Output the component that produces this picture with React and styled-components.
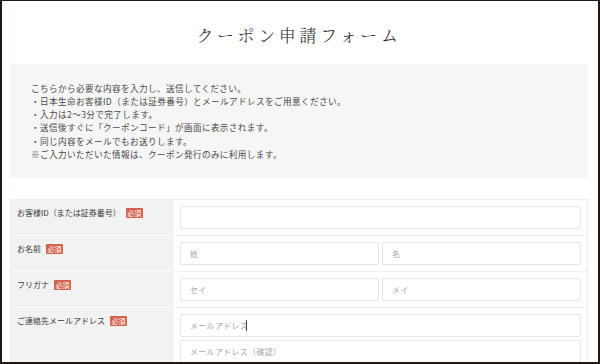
import React from "react";
import styled, { createGlobalStyle } from "styled-components";

const Global = createGlobalStyle`
  html, body { margin: 0; padding: 0; background: #fff; }
  body { font-family: "Noto Sans CJK JP", "Noto Sans", sans-serif; color: #333; }
  * { box-sizing: border-box; }
`;

const Frame = styled.div`
  width: 600px;
  height: 364px;
  overflow: hidden;
  border: 2px solid #231815;
  border-top-width: 1px;
  padding: 0 10px 0 8px;
  background: #fff;
`;

const Title = styled.h1`
  margin: 0;
  padding-top: 22px;
  margin-bottom: 17px;
  font-family: "Noto Serif CJK JP", "Noto Sans CJK JP", serif;
  font-weight: 300;
  font-size: 17px;
  line-height: 24px;
  letter-spacing: 3.6px;
  text-align: center;
  color: #2a2a2a;
`;

const InfoBox = styled.div`
  background: #f6f6f6;
  padding: 17.5px 21px 16.5px;
  font-size: 8.6px;
  line-height: 13.33px;
  letter-spacing: 0.4px;
  color: #4a4a4a;
`;

const InfoLine = styled.p`
  margin: 0;
  white-space: nowrap;
`;

const FormTable = styled.div`
  margin-top: 21px;
  display: grid;
  grid-template-columns: 163px 1fr;
  border: 1px solid #efefef;
  border-bottom: none;
`;

const LabelCell = styled.div`
  background: #f2f2f2;
  padding: 8px 6px 0 6px;
  border-bottom: 1px solid #fafafa;
  display: flex;
  align-items: flex-start;
  font-size: 8px;
  line-height: 10px;
  font-weight: 400;
  color: #3a3a3a;
  white-space: nowrap;
`;

const Badge = styled.span`
  display: inline-block;
  margin-left: 5px;
  width: 17px;
  height: 10px;
  border-radius: 1px;
  background: #d4614c;
  color: #fff;
  font-size: 7px;
  line-height: 10px;
  text-align: center;
  font-weight: 400;
`;

const InputCell = styled.div`
  padding: 6px 6px;
  border-bottom: 1px solid #efefef;
  display: flex;
  flex-direction: column;
  gap: 3px;
`;

const Pair = styled.div`
  display: grid;
  grid-template-columns: 1fr 1fr;
  gap: 3px;
`;

const Field = styled.div`
  position: relative;
`;

const Input = styled.input`
  display: block;
  width: 100%;
  height: 23px;
  border: 1px solid #e6e6e6;
  border-radius: 2px;
  padding: 0 9px;
  font-family: "Noto Sans CJK JP", sans-serif;
  font-size: 8px;
  letter-spacing: 0.3px;
  color: #333;
  background: #fff;
  outline: none;
  &::placeholder { color: #a8a8a8; }
`;

const Caret = styled.span`
  position: absolute;
  left: ${(p) => p.$left}px;
  top: 6px;
  width: 1px;
  height: 11px;
  background: #444;
`;

const Label = ({ text }) => (
  <LabelCell>
    {text}
    <Badge>必須</Badge>
  </LabelCell>
);

export default function App() {
  return (
    <>
      <Global />
      <Frame>
        <Title>クーポン申請フォーム</Title>
        <InfoBox>
          <InfoLine>こちらから必要な内容を入力し、送信してください。</InfoLine>
          <InfoLine>・日本生命お客様ID（または証券番号）とメールアドレスをご用意ください。</InfoLine>
          <InfoLine>・入力は2〜3分で完了します。</InfoLine>
          <InfoLine>・送信後すぐに「クーポンコード」が画面に表示されます。</InfoLine>
          <InfoLine>・同じ内容をメールでもお送りします。</InfoLine>
          <InfoLine>※ご入力いただいた情報は、クーポン発行のみに利用します。</InfoLine>
        </InfoBox>
        <FormTable>
          <Label text="お客様ID（または証券番号）" />
          <InputCell>
            <Input type="text" />
          </InputCell>

          <Label text="お名前" />
          <InputCell>
            <Pair>
              <Input type="text" placeholder="姓" />
              <Input type="text" placeholder="名" />
            </Pair>
          </InputCell>

          <Label text="フリガナ" />
          <InputCell>
            <Pair>
              <Input type="text" placeholder="セイ" />
              <Input type="text" placeholder="メイ" />
            </Pair>
          </InputCell>

          <Label text="ご連絡先メールアドレス" />
          <InputCell>
            <Field>
              <Input type="email" placeholder="メールアドレス" />
              <Caret $left={66} />
            </Field>
            <Input type="email" placeholder="メールアドレス（確認）" />
          </InputCell>
        </FormTable>
      </Frame>
    </>
  );
}
